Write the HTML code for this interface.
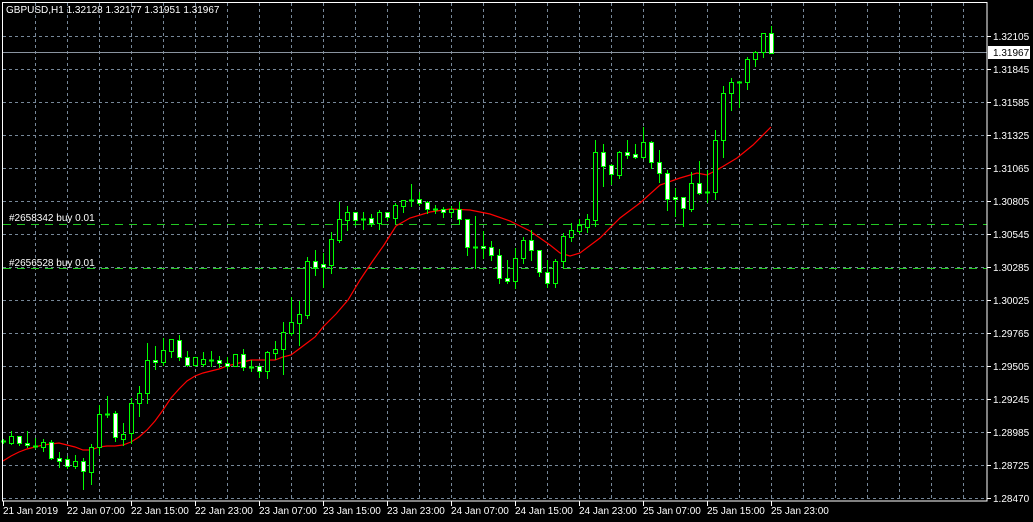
<!DOCTYPE html>
<html><head><meta charset="utf-8"><style>
html,body{margin:0;padding:0;background:#000;width:1033px;height:522px;overflow:hidden}
svg{display:block}
text{font-family:"Liberation Sans",sans-serif;font-size:10px;fill:#fff}
</style></head><body>
<svg id="s" width="1033" height="522" xmlns="http://www.w3.org/2000/svg" shape-rendering="crispEdges">
<rect width="1033" height="522" fill="#000"/>
<g id="grid" stroke="#778899" stroke-width="1" stroke-dasharray="3,3"></g>
<line x1="3" y1="52.5" x2="987" y2="52.5" stroke="#8a94a0"/>
<line x1="3" y1="224.5" x2="987" y2="224.5" stroke="#22c822" stroke-dasharray="8,6"/>
<line x1="3" y1="268.5" x2="987" y2="268.5" stroke="#22c822" stroke-dasharray="8,6"/>
<polyline id="ma" fill="none" stroke="#ff0000" stroke-width="1.2" shape-rendering="auto" points="3,461 11,456 19,452 27,449 35,447 43,445 51,444 59,443 67,445 75,447 83,450 91,450 99,447 107,446 115,446 123,445 131,442 139,437 147,430 155,421 163,410 171,398 179,389 187,381 195,376 203,373 211,371 219,369 227,366 235,364 243,362 251,360 259,360 267,360 275,360 283,357 291,355 299,349 307,343 315,337 323,327 336,314 348,300 360,280 372,262 384,245 396,226 410,218 430,212 450,209 470,210 490,214 510,221 530,231 550,245 560,253 570,256 580,253 600,238 620,218 640,203 660,185 680,178 697,173 707,175 717,170 737,158 753,145 771,127"/>
<g id="c"></g>
<rect x="2.5" y="2.5" width="984.5" height="498.5" fill="none" stroke="#fff"/>
<g id="ticks" stroke="#fff"></g>
<text x="6" y="13">GBPUSD,H1  1.32128 1.32177 1.31951 1.31967</text>
<text x="9" y="221">#2658342 buy 0.01</text>
<text x="9" y="266">#2656528 buy 0.01</text>
<rect x="988" y="46" width="42" height="13" fill="#fff"/>
<text x="993" y="56" style="fill:#000">1.31967</text>
<g id="lab"></g>
</svg>
<script>
var NS="http://www.w3.org/2000/svg";
function el(p,t,a,txt){var e=document.createElementNS(NS,t);for(var k in a)e.setAttribute(k,a[k]);if(txt)e.textContent=txt;document.getElementById(p).appendChild(e);return e;}
var hy=[36,69,102,135,168,201,234,267,300,333,366,399,432,465,498];
var hl=["1.32105","1.31845","1.31585","1.31325","1.31065","1.30805","1.30545","1.30285","1.30025","1.29765","1.29505","1.29245","1.28985","1.28725","1.28470"];
hy.forEach(function(y,i){el("grid","line",{x1:3,y1:y+.5,x2:987,y2:y+.5});el("ticks","line",{x1:987,y1:y+.5,x2:991,y2:y+.5});el("lab","text",{x:993,y:y+4},hl[i]);});
for(var x=35;x<987;x+=32)el("grid","line",{x1:x+.5,y1:3,x2:x+.5,y2:501});
var bl=["21 Jan 2019","22 Jan 07:00","22 Jan 15:00","22 Jan 23:00","23 Jan 07:00","23 Jan 15:00","23 Jan 23:00","24 Jan 07:00","24 Jan 15:00","24 Jan 23:00","25 Jan 07:00","25 Jan 15:00","25 Jan 23:00"];
for(var i=0;i<bl.length;i++){var tx=3+64*i;el("ticks","line",{x1:tx+.5,y1:501,x2:tx+.5,y2:506});el("lab","text",{x:(i==0?3:tx),y:514},bl[i]);}
var C=[["d",441,441,439,443],["h",436,443,431,444],["w",436,443,436,445],["w",443,445,431,447],["d",446,446,438,448],["h",442,447,439,451],["w",442,458,440,459],["w",458,461,452,467],["w",459,466,456,468],["h",461,466,455,468],["w",461,471,458,489],["h",447,472,444,484],["h",414,447,405,454],["d",414,414,396,417],["w",413,437,411,441],["h",434,439,423,445],["h",403,433,398,443],["h",393,403,386,416],["h",360,393,343,403],["w",360,362,346,369],["h",350,362,338,365],["h",339,351,339,357],["w",340,357,335,360],["w",357,365,351,366],["h",357,365,357,366],["h",359,364,352,366],["d",360,360,351,366],["w",360,363,356,367],["w",363,366,357,368],["h",354,366,354,366],["w",354,367,349,370],["d",367,367,360,371],["w",366,371,366,377],["h",352,371,351,378],["h",349,353,341,359],["h",332,349,322,374],["h",322,333,297,335],["h",314,323,301,345],["h",261,315,257,318],["w",261,267,250,275],["w",264,267,253,287],["h",239,265,232,273],["h",219,240,202,242],["h",212,220,206,230],["w",212,220,212,225],["d",219,219,212,229],["w",218,223,214,226],["h",212,223,210,229],["w",212,217,212,220],["h",205,218,203,223],["h",200,206,200,212],["d",200,200,184,206],["w",199,203,192,205],["w",202,209,201,213],["d",209,209,205,213],["w",209,212,207,217],["h",209,212,206,217],["w",209,219,202,224],["w",219,247,219,255],["d",247,247,216,268],["w",246,248,231,258],["w",247,255,241,260],["w",255,278,249,283],["w",278,281,260,283],["h",258,281,248,288],["h",240,258,237,263],["w",240,250,230,260],["w",250,272,250,276],["w",272,283,260,287],["h",261,283,259,287],["h",236,261,233,268],["h",230,237,223,241],["h",225,231,219,233],["h",219,227,214,232],["h",152,220,140,226],["w",152,166,144,186],["w",165,174,164,184],["h",152,175,151,178],["w",152,155,140,158],["w",154,157,144,158],["h",142,157,127,158],["w",142,162,141,168],["w",162,173,150,182],["w",173,199,170,210],["w",197,199,188,216],["w",197,208,197,226],["h",183,209,172,211],["w",183,193,161,194],["d",192,192,170,202],["h",140,192,130,199],["h",93,140,86,157],["h",82,93,78,110],["d",82,82,81,107],["h",59,82,57,89],["h",52,59,51,66],["h",33,52,33,57],["w",33,53,26,53]];
C.forEach(function(c,i){var cx=3+8*i;
el("c","line",{x1:cx+.5,y1:c[3],x2:cx+.5,y2:c[4]+1,stroke:"#00ff00"});
if(c[0]=="d"){el("c","rect",{x:cx-2,y:c[1]-.5,width:5,height:2,fill:"#00ff00"});}
else{el("c","rect",{x:cx-1.5,y:c[1]+.5,width:4,height:Math.max(1,c[2]-c[1]),fill:c[0]=="w"?"#fff":"#000",stroke:"#00ff00"});}
});
</script>
</body></html>
